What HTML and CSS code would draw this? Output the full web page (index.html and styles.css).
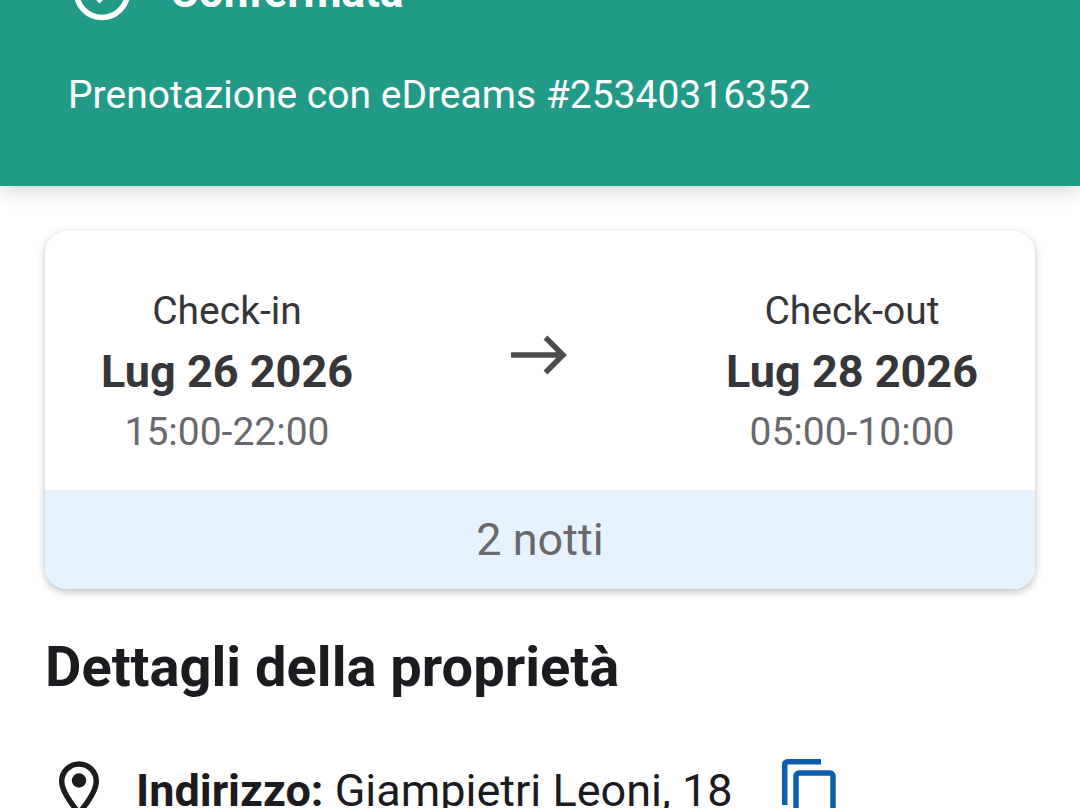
FILE: index.html
```
<!DOCTYPE html>
<html lang="it">
<head>
  <meta charset="UTF-8" />
  <meta name="viewport" content="width=device-width, initial-scale=1.0"/>
  <title>Prenotazione</title>
  <link rel="stylesheet" href="styles.css">
</head>
<body>
  <!-- Booking status -->
  <header class="status">
    <div class="status-title">
      <svg class="status-icon" viewBox="0 0 60 60" fill="none" stroke="currentColor" stroke-width="5.500">
        <circle cx="30" cy="30" r="25.500"/>
        <path d="M16 26l11.500 11.500 18-18"/>
      </svg>
      <h1>Confermata</h1>
    </div>
    <p>Prenotazione con eDreams #25340316352</p>
  </header>

  <main class="content">
    <!-- Stay dates -->
    <section class="card">
      <div class="dates">
        <div class="date">
          <span class="date-label">Check-in</span>
          <span class="date-day">Lug 26 2026</span>
          <span class="date-time">15:00-22:00</span>
        </div>
        <svg class="arrow" viewBox="0 0 60 44" fill="none" stroke="currentColor" stroke-width="5.500">
          <path d="M1 22h52M35.500 4.500L53 22 35.500 39.500"/>
        </svg>
        <div class="date">
          <span class="date-label">Check-out</span>
          <span class="date-day">Lug 28 2026</span>
          <span class="date-time">05:00-10:00</span>
        </div>
      </div>
      <div class="nights">2 notti</div>
    </section>

    <!-- Property details -->
    <h2>Dettagli della proprietà</h2>
    <div class="address">
      <svg class="pin" viewBox="0 0 44 60" fill="none" stroke="currentColor" stroke-width="5.500">
        <path d="M22 4C12.500 4 4.700 11.600 4.700 21.500C4.700 33.500 22 53 22 53S39.300 33.500 39.300 21.500C39.300 11.600 31.500 4 22 4Z"/>
        <circle cx="22" cy="20.500" r="7.200" fill="currentColor" stroke="none"/>
      </svg>
      <p><b>Indirizzo:</b> Giampietri Leoni, 18</p>
      <button class="copy" aria-label="Copia indirizzo">
        <svg viewBox="0 0 56 64" fill="none" stroke="currentColor" stroke-width="5.500">
          <path d="M3.700 47V6.700Q3.700 3.700 6.700 3.700H40"/>
          <rect x="15" y="15" width="37" height="46" rx="3"/>
        </svg>
      </button>
    </div>
  </main>
</body>
</html>
```
FILE: styles.css
```
body {
  margin: 0;
  font-family: Roboto, sans-serif;
  background: #fff;
  color: #1b1b20;
  overflow: hidden;
}
h1, h2, p {
  margin: 0;
}
svg {
  display: block;
  flex: none;
}
.status {
  background: #219b88;
  color: #fff;
  padding: 0 68px 63px;
  box-shadow: 0 4px 20px rgba(0, 0, 0, 0.18);
}
.status-title {
  display: flex;
  align-items: center;
  gap: 38px;
  margin-top: -38px;
  padding-left: 4px;
}
.status-icon {
  width: 60px;
  height: 60px;
}
h1 {
  font-size: 44px;
  line-height: 60px;
  font-weight: 700;
}
.status p {
  margin-top: 45px;
  font-size: 39px;
  line-height: 56px;
}
.content {
  padding: 45px 45px 0;
}
.card {
  border-radius: 22px;
  overflow: hidden;
  background: #fff;
  box-shadow: 0 3px 8px rgba(0, 0, 0, 0.25);
}
.dates {
  display: flex;
  justify-content: space-between;
  align-items: flex-start;
  padding: 50px 57px 28px 56px;
}
.date {
  display: flex;
  flex-direction: column;
  align-items: center;
}
.date-label {
  font-size: 39px;
  line-height: 60px;
  color: #363639;
}
.date-day {
  font-size: 45px;
  line-height: 61px;
  font-weight: 700;
  color: #363639;
}
.date-time {
  font-size: 39px;
  line-height: 60px;
  color: #69696d;
}
.arrow {
  width: 60px;
  height: 44px;
  margin-top: 52px;
  color: #4d4d4f;
}
.nights {
  background: #e6f3ff;
  color: #69696d;
  font-size: 45px;
  line-height: 99px;
  text-align: center;
}
h2 {
  margin-top: 42px;
  font-size: 56px;
  line-height: 72px;
  font-weight: 700;
}
.address {
  display: flex;
  align-items: center;
  margin-top: 54px;
  padding-left: 12px;
}
.pin {
  width: 44px;
  height: 60px;
}
.address p {
  margin-left: 35px;
  padding-top: 2px;
  font-size: 45px;
  line-height: 64px;
}
.copy {
  margin-left: 48px;
  padding: 0;
  border: 0;
  background: none;
  color: #0d5eaf;
}
.copy svg {
  width: 56px;
  height: 64px;
}
```
